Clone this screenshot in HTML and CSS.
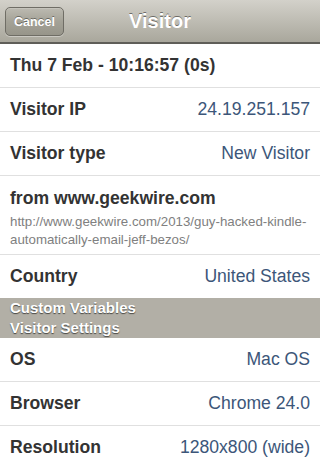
FILE: index.html
```html
<!DOCTYPE html>
<html>
<head>
<meta charset="utf-8">
<link rel="stylesheet" href="styles.css">
</head>
<body>
<div class="nav">
  <div class="cancel">Cancel</div>
  <div class="title">Visitor</div>
</div>
<div class="list">
  <div class="row"><span class="label">Thu 7 Feb - 10:16:57 (0s)</span></div>
  <div class="row"><span class="label">Visitor IP</span><span class="value">24.19.251.157</span></div>
  <div class="row"><span class="label">Visitor type</span><span class="value">New Visitor</span></div>
  <div class="row ref">
    <div class="label">from www.geekwire.com</div>
    <div class="url">http://www.geekwire.com/2013/guy-hacked-kindle-automatically-email-jeff-bezos/</div>
  </div>
  <div class="row last"><span class="label">Country</span><span class="value">United States</span></div>
  <div class="section">Custom Variables</div>
  <div class="section">Visitor Settings</div>
  <div class="row"><span class="label">OS</span><span class="value">Mac OS</span></div>
  <div class="row"><span class="label">Browser</span><span class="value">Chrome 24.0</span></div>
  <div class="row"><span class="label">Resolution</span><span class="value">1280x800 (wide)</span></div>
</div>
</body>
</html>
```
FILE: styles.css
```css
html, body {
  margin: 0;
  padding: 0;
  background: #fff;
  font-family: "Liberation Sans", Arial, sans-serif;
  overflow: hidden;
}
.nav {
  height: 42px;
  border-bottom: 2px solid #5f5e58;
  background: linear-gradient(#d3d1ca, #bebcb3 50%, #a9a79c);
  display: flex;
  align-items: center;
  justify-content: center;
  position: relative;
}
.title {
  color: #fff;
  font-weight: bold;
  font-size: 20px;
  text-shadow: 0 -1px 0 rgba(0,0,0,0.45);
}
.cancel {
  position: absolute;
  left: 5px;
  top: 7px;
  width: 59px;
  height: 29px;
  box-sizing: border-box;
  border: 1px solid #6f6d65;
  border-radius: 5px;
  background: linear-gradient(#bcbab1, #a4a297 50%, #97958a);
  box-shadow: 0 1px 0 rgba(255,255,255,0.35), inset 0 1px 0 rgba(255,255,255,0.15);
  color: #fff;
  font-weight: bold;
  font-size: 12.5px;
  display: flex;
  align-items: center;
  justify-content: center;
  text-shadow: 0 -1px 0 rgba(0,0,0,0.4);
}
.row {
  height: 43px;
  border-bottom: 1px solid #e0e0e0;
  display: flex;
  align-items: center;
  justify-content: space-between;
  padding: 0 10px 0 10px;
}
.row.last {
  border-bottom: none;
}
.label {
  font-weight: bold;
  font-size: 17.6px;
  color: #333;
}
.value {
  font-size: 17.6px;
  color: #3c5679;
}
.row.ref {
  flex-direction: column;
  align-items: flex-start;
  justify-content: flex-start;
  padding-top: 12px;
  box-sizing: border-box;
  height: 79px;
}
.url {
  margin-top: 4px;
  font-size: 13.3px;
  line-height: 18px;
  color: #808080;
}
.section {
  height: 20px;
  line-height: 20px;
  background: #b2afa6;
  color: #fff;
  font-weight: bold;
  font-size: 15px;
  padding-left: 10px;
  text-shadow: 0 1px 1px rgba(0,0,0,0.6);
}
```
